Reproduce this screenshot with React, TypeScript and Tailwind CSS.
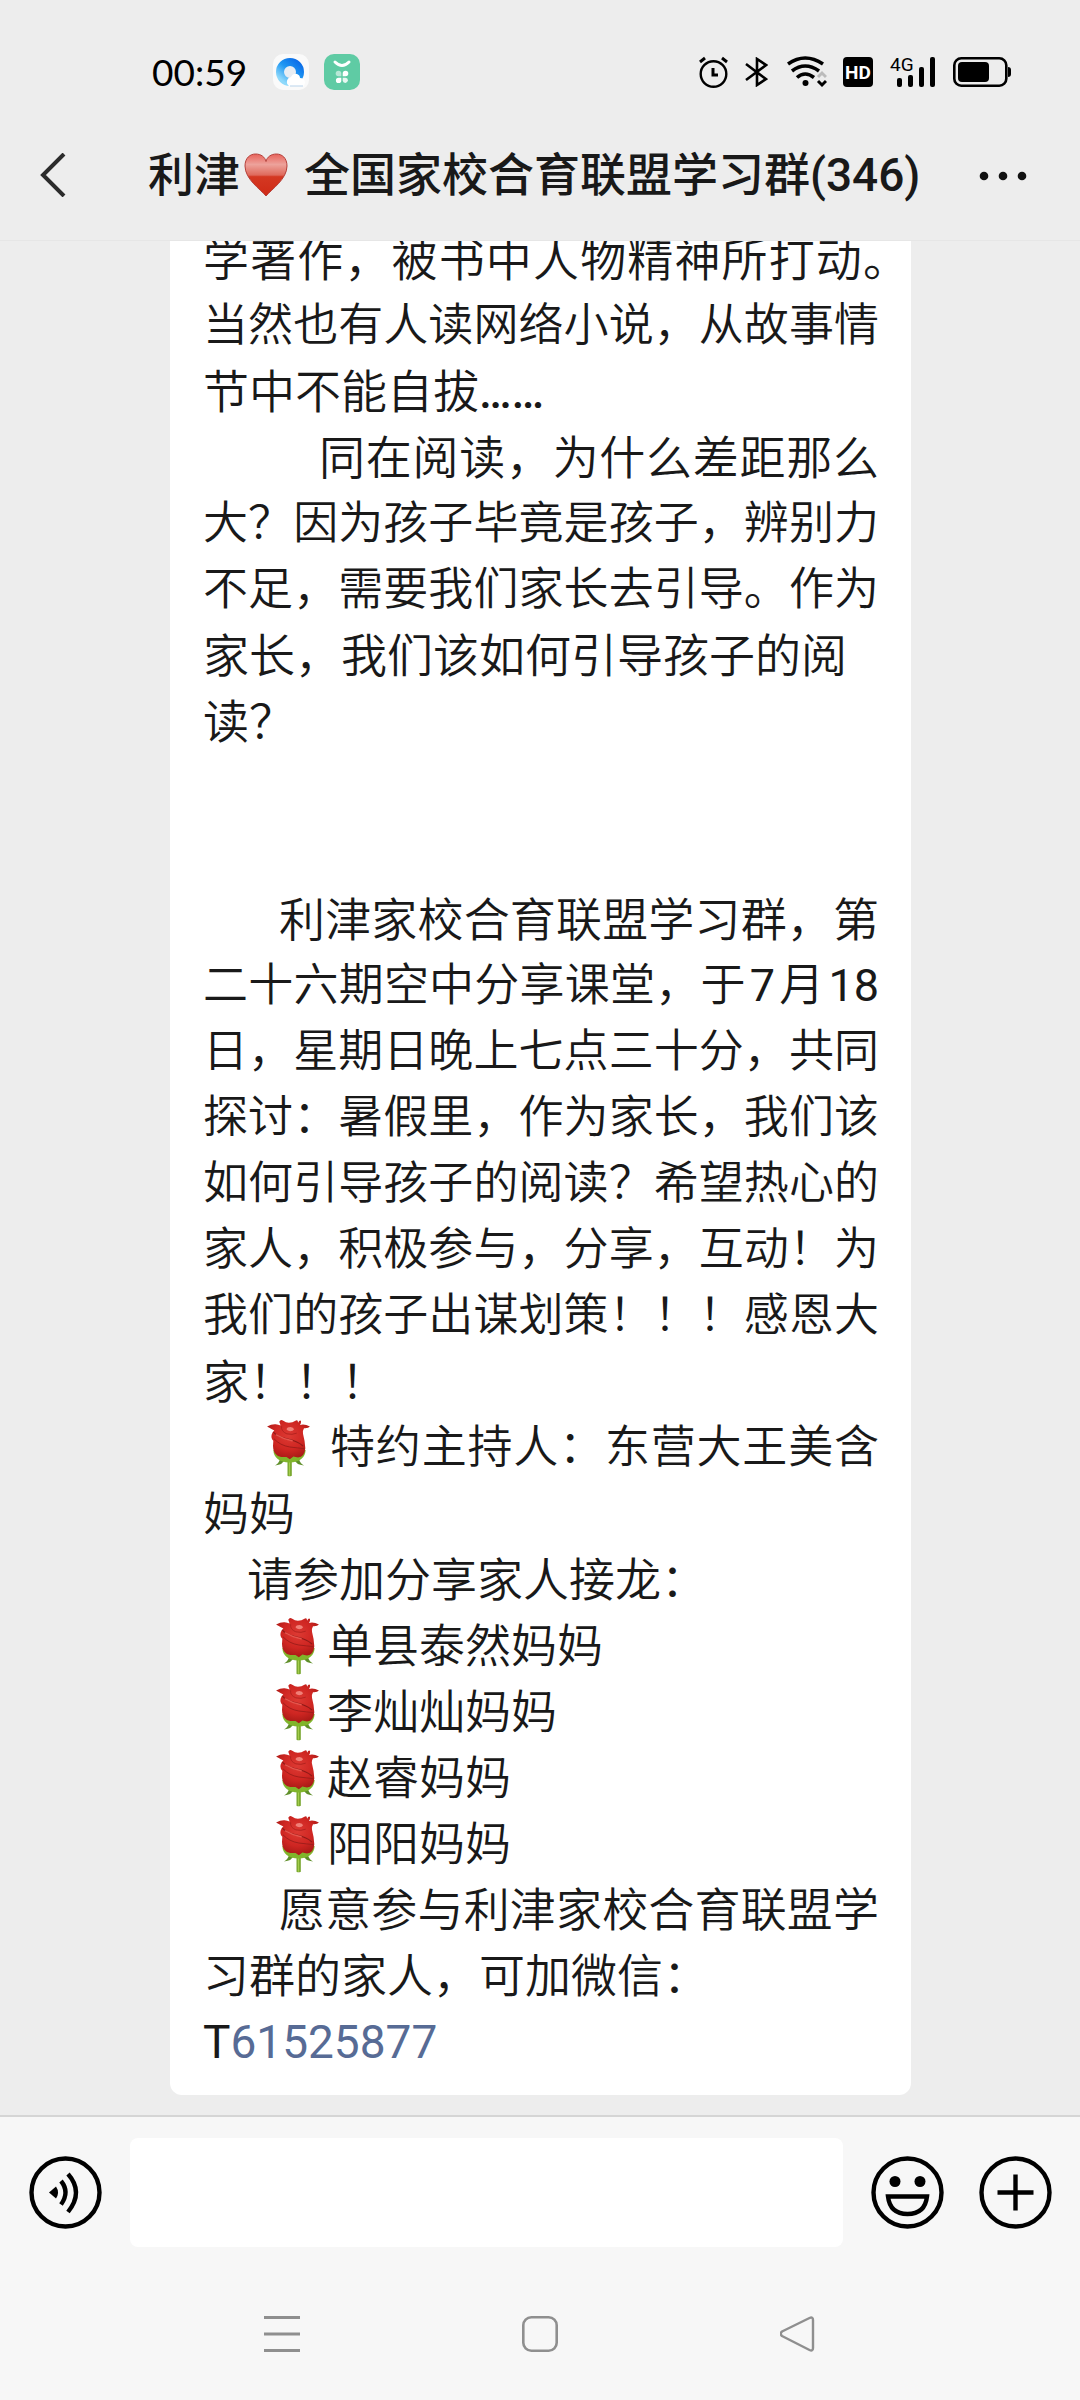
import type { ReactNode } from 'react'
import clsx from 'clsx'

interface LineProps {
    children?: ReactNode
    justify?: boolean
    dense?: boolean
    className?: string
}

// dense: fifteen characters on one line
function Line({ children, justify, dense, className }: LineProps) {
    return (
        <p
            className={clsx(
                'h-[66px] leading-[66px] whitespace-nowrap',
                dense ? 'text-[45px]' : 'text-[46px]',
                (justify || dense) && '[text-align-last:justify]',
                className
            )}
        >
            {children}
        </p>
    )
}

function Rose() {
    return (
        <svg viewBox="36 56 130 176" className="w-[43px] h-[58px] shrink-0" role="img" aria-label="玫瑰">
            <defs>
                <radialGradient id="petal" cx="0.5" cy="0.4" r="0.6">
                    <stop offset="0" stopColor="#dd3a33" />
                    <stop offset="0.6" stopColor="#cf2622" />
                    <stop offset="1" stopColor="#a81a16" />
                </radialGradient>
            </defs>
            <path d="M98 178h13v50q-7 4-13 0z" fill="#76a52c" />
            <path d="M102 180h4v48h-4z" fill="#a3cc4c" />
            <path d="M92 176q-8 20-32 21 12-6 16-22zM116 176q8 20 32 21-12-6-16-22z" fill="#5f8f2a" />
            <path d="M55 150q2 36 49 38 47-2 49-38z" fill="#80b52b" />
            <path d="M36 79q14-8 26-7 8 1 15 4l-4-12q4-8 12-3 8 6 17 6 12 0 20-6 8-4 8 6 5-9 9-5 1 8-3 12 14-4 30 5-5 6-18 5-5 8-3 17 6 22 7 44-2 26-22 28-8-1-14-3l-11 8-10-7q-12 2-26-3-15-9-15-30l1-16q-8-8-5-19 2-8 8-12-10-5-22-12z" fill="url(#petal)" />
            <path d="M55 96q12 14 40 20 34 7 50 22" fill="none" stroke="#8e1a18" strokeWidth="3.500" />
            <path d="M57 116q18 20 48 25 26 3 44 5" fill="none" stroke="#a01d1a" strokeWidth="3" />
            <path d="M80 78q-2 16 16 23 16 4 30-2" fill="none" stroke="#b2221e" strokeWidth="3" />
            <path d="M95 87q2-7 12-7 9 1 11 7-3 6-12 6-9-1-11-6z" fill="#f08078" />
            <path d="M64 104q20 12 48 18" fill="none" stroke="#e6554d" strokeWidth="4" strokeLinecap="round" />
        </svg>
    )
}

function Heart() {
    return (
        <svg viewBox="0 0 44 44" className="w-11 h-11 shrink-0 mx-1" role="img" aria-label="爱心">
            <defs>
                <linearGradient id="heart" x1="0" y1="0" x2="0" y2="1">
                    <stop offset="0" stopColor="#e8625a" />
                    <stop offset="0.25" stopColor="#eda29b" />
                    <stop offset="0.5" stopColor="#df6a5c" />
                    <stop offset="0.54" stopColor="#d43822" />
                    <stop offset="1" stopColor="#cf2a16" />
                </linearGradient>
            </defs>
            <path d="M22 43C16 36 1 26 1 13 1 5 6 1 11.500 1 17 1 21 4 22 8.500 23 4 27 1 32.500 1 38 1 43 5 43 13 43 26 28 36 22 43z" fill="url(#heart)" stroke="#b5403a" strokeWidth="1" />
        </svg>
    )
}

function StatusBar() {
    return (
        <div className="flex items-center justify-between h-[110px] pt-[34px] pl-[152px] pr-[68px] text-black">
            <div className="flex items-center">
                <time className="font-[Lato,sans-serif] text-[37px] leading-10">00:59</time>
                <svg viewBox="0 0 36 36" className="w-9 h-9 ml-[26px]">
                    <defs>
                        <linearGradient id="ring" x1="1" y1="0" x2="0.200" y2="1">
                            <stop offset="0" stopColor="#0a6be8" />
                            <stop offset="0.5" stopColor="#1f97f2" />
                            <stop offset="1" stopColor="#8fd9fb" />
                        </linearGradient>
                    </defs>
                    <rect width="36" height="36" rx="10" fill="#fafafa" />
                    <circle cx="17" cy="18" r="10" fill="#e8edf3" stroke="url(#ring)" strokeWidth="8" />
                    <path d="M16 32a5 5 0 0 1 2-9q2-4 6-3 3 1 3 4 4 0 5 4 0 3-2 4z" fill="#fff" />
                    <path d="M17 32h13" stroke="#b9d3ea" strokeWidth="1" />
                </svg>
                <svg viewBox="0 0 36 36" className="w-9 h-9 ml-[15px]">
                    <rect width="36" height="36" rx="10" fill="#5fcba4" />
                    <path d="M11 8q7 7 14 0" fill="none" stroke="#fff" strokeWidth="3" strokeLinecap="round" />
                    <path d="M17.300 22.300h-2.800a2.800 2.800 0 1 1 2.800-2.800z" fill="#fff" opacity="0.550" />
                    <path d="M18.700 22.300v-2.800a2.800 2.800 0 1 1 2.800 2.800zM17.300 23.700v2.500a2.700 2.700 0 1 1-2.700-2.500z" fill="#fff" />
                    <path d="M18.700 23.700h2.800a2.600 2.600 0 1 1-2.800 2.800z" fill="#fff" opacity="0.850" />
                </svg>
            </div>

            <div className="flex items-center">
                <svg viewBox="0 0 29 32" className="w-[29px] h-8" fill="none" stroke="#000">
                    <circle cx="14.500" cy="18" r="12.800" strokeWidth="2.400" />
                    <path d="M1 6l5-4M28 6l-5-4" strokeWidth="3" />
                    <path d="M14 12v7h5" strokeWidth="3" />
                </svg>
                <svg viewBox="0 0 23 30" className="w-[23px] h-[30px] ml-[17px]" fill="none" stroke="#000" strokeWidth="2.600">
                    <path d="M1 7l20 15-9 6V2l9 6L1 23" />
                </svg>
                <svg viewBox="0 0 40 32" className="w-10 h-8 ml-[19px]" fill="none" stroke="#000" strokeWidth="3.600">
                    <path d="M1 8q17-12 35 0" />
                    <path d="M5 15q13-10 27 0" />
                    <path d="M10 21.500q8-7 17 0" />
                    <circle cx="18.500" cy="27" r="3" fill="#000" stroke="none" />
                    <path d="M31 21l4-4 4 4" stroke="#bbb" strokeWidth="3" />
                    <path d="M31 25l4 4 4-4" strokeWidth="3" />
                </svg>
                <span className="flex items-center justify-center w-[30px] h-[30px] ml-4 rounded bg-black text-white font-[Roboto,sans-serif] font-bold text-[19px] leading-none">
                    HD
                </span>
                <span className="relative w-[46px] h-[30px] ml-[17px]">
                    <span className="absolute left-0 top-0 font-[Roboto,sans-serif] text-[19px] leading-4">4G</span>
                    <svg viewBox="0 0 46 30" className="w-[46px] h-[30px]">
                        <rect x="7" y="21" width="5" height="9" rx="2" />
                        <rect x="18" y="18" width="5" height="12" rx="2" />
                        <rect x="29" y="10" width="5" height="20" rx="2" />
                        <rect x="40" y="0" width="5" height="30" rx="2" />
                    </svg>
                </span>
                <svg viewBox="0 0 59 30" className="w-[59px] h-[30px] ml-[17px]">
                    <rect x="1.300" y="1.300" width="52" height="27.400" rx="7" fill="none" stroke="#000" strokeWidth="2.600" />
                    <rect x="5" y="5" width="31" height="20" rx="4" />
                    <path d="M55 10q3 0 3 3v4q0 3-3 3z" />
                </svg>
            </div>
        </div>
    )
}

function TitleBar() {
    return (
        <div className="flex items-center h-[130px] pl-10 pr-[53px]">
            <button type="button" aria-label="返回" className="w-7 h-11">
                <svg viewBox="0 0 28 44" className="w-7 h-11" fill="none" stroke="#2b2b2b" strokeWidth="4">
                    <path d="M24 1L3 22l21 21" />
                </svg>
            </button>
            <h1 className="flex items-center ml-20 mr-auto text-[46px] leading-[66px] font-medium whitespace-nowrap">
                <span>利津</span>
                <Heart />
                <span className="ml-3">全国家校合育联盟学习群(346)</span>
            </h1>
            <button type="button" aria-label="更多" className="w-12 h-11">
                <svg viewBox="0 0 48 44" className="w-12 h-11" fill="#111">
                    <circle cx="5" cy="23" r="4.300" />
                    <circle cx="24" cy="23" r="4.300" />
                    <circle cx="43" cy="23" r="4.300" />
                </svg>
            </button>
        </div>
    )
}

function Message() {
    return (
        <article className="ml-[170px] mr-[169px] pl-[33px] pr-8 pt-6 pb-5 rounded-xl bg-white font-[350]">
            <Line justify>
                学著作，被书中人物精神所打动<span className="inline-block w-4">。</span>
            </Line>
            <Line dense>当然也有人读网络小说，从故事情</Line>
            <Line>
                节中不能自拔<span className="font-medium">……</span>
            </Line>
            <Line justify className="pl-[116px]">同在阅读，为什么差距那么</Line>
            <Line dense>大？因为孩子毕竟是孩子，辨别力</Line>
            <Line dense>不足，需要我们家长去引导。作为</Line>
            <Line>家长，我们该如何引导孩子的阅</Line>
            <Line>读？</Line>
            <Line />
            <Line />
            <Line justify className="pl-[76px]">利津家校合育联盟学习群，第</Line>
            <Line dense>
                二十六期空中分享课堂，于<span className="mx-1 font-normal">7</span>月<span className="ml-1 font-normal">18</span>
            </Line>
            <Line dense>日，星期日晚上七点三十分，共同</Line>
            <Line dense>探讨：暑假里，作为家长，我们该</Line>
            <Line dense>如何引导孩子的阅读？希望热心的</Line>
            <Line dense>家人，积极参与，分享，互动！为</Line>
            <Line dense>我们的孩子出谋划策！！！感恩大</Line>
            <Line>家！！！</Line>
            <Line dense className="flex items-center gap-5 pl-16">
                <Rose />
                <span className="flex-1">特约主持人：东营大王美含</span>
            </Line>
            <Line>妈妈</Line>
            <Line className="pl-11">请参加分享家人接龙：</Line>
            {['单县泰然妈妈', '李灿灿妈妈', '赵睿妈妈', '阳阳妈妈'].map((name) => (
                <Line key={name} className="flex items-center gap-2 pl-[73px]">
                    <Rose />
                    <span>{name}</span>
                </Line>
            ))}
            <Line justify className="pl-[76px]">愿意参与利津家校合育联盟学</Line>
            <Line>习群的家人，可加微信：</Line>
            <Line className="font-normal">
                T<a href="#61525877" className="text-[#576b95]">61525877</a>
            </Line>
        </article>
    )
}

function InputBar() {
    return (
        <form className="flex items-center pl-[29px] pr-7 py-[21px] border-t-2 border-[#d5d5d5]">
            <button type="button" aria-label="语音" className="shrink-0">
                <svg viewBox="0 0 73 73" className="w-[73px] h-[73px]" fill="none" stroke="#000" strokeWidth="4.400">
                    <circle cx="36.500" cy="36.500" r="34" />
                    <path d="M20 36.500l7-6q4 6 0 12z" fill="#000" stroke="none" />
                    <path d="M32 25q9 11 0 23.500M39 18q16 18 0 38" />
                </svg>
            </button>
            <input type="text" aria-label="消息" className="flex-1 min-w-0 h-[109px] mx-7 px-6 rounded-lg bg-white text-[46px] outline-none" />
            <button type="button" aria-label="表情" className="shrink-0">
                <svg viewBox="0 0 73 73" className="w-[73px] h-[73px]" fill="none" stroke="#000" strokeWidth="4.400">
                    <circle cx="36.500" cy="36.500" r="34" />
                    <circle cx="24" cy="25.500" r="5.500" fill="#000" stroke="none" />
                    <circle cx="49" cy="25.500" r="5.500" fill="#000" stroke="none" />
                    <path d="M17 40.500h39q-2 17.500-19.500 17.500T17 40.500z" />
                </svg>
            </button>
            <button type="button" aria-label="添加" className="shrink-0 ml-[35px]">
                <svg viewBox="0 0 73 73" className="w-[73px] h-[73px]" fill="none" stroke="#000" strokeWidth="4.400">
                    <circle cx="36.500" cy="36.500" r="34" />
                    <path d="M36.500 18.500v36M18.500 36.500h36" />
                </svg>
            </button>
        </form>
    )
}

function SystemNav() {
    return (
        <nav className="grid grid-cols-3 h-[132px] px-[153px]">
            <button type="button" aria-label="最近任务" className="flex items-center justify-center">
                <svg viewBox="0 0 36 36" className="w-9 h-9" stroke="#8f8f8f" strokeWidth="3">
                    <path d="M0 1.500h36M0 18h36M0 34.500h36" />
                </svg>
            </button>
            <button type="button" aria-label="主屏幕" className="flex items-center justify-center">
                <svg viewBox="0 0 36 36" className="w-9 h-9" fill="none" stroke="#8f8f8f" strokeWidth="2.600">
                    <rect x="1.300" y="1.300" width="33.400" height="33.400" rx="8" />
                </svg>
            </button>
            <button type="button" aria-label="后退" className="flex items-center justify-center">
                <svg viewBox="0 0 36 36" className="w-9 h-9" fill="none" stroke="#8f8f8f" strokeWidth="2.400" strokeLinejoin="round">
                    <path d="M2 15.500L29.500 2q3.500-1.500 3.500 2v28q0 3.500-3.500 2L2 20q-2.500-2.200 0-4.500z" />
                </svg>
            </button>
        </nav>
    )
}

export default function App() {
    return (
        <div className="flex flex-col h-screen overflow-hidden bg-[#ededed] text-[#191919] font-[Roboto,'Noto_Sans_CJK_SC',sans-serif]">
            <header className="shrink-0 border-b border-[#e6e6e6]">
                <StatusBar />
                <TitleBar />
            </header>
            <main className="flex flex-col flex-1 min-h-0 justify-end pb-5 overflow-hidden">
                <Message />
            </main>
            <footer className="shrink-0 bg-[#f7f7f7]">
                <InputBar />
                <SystemNav />
            </footer>
        </div>
    )
}
